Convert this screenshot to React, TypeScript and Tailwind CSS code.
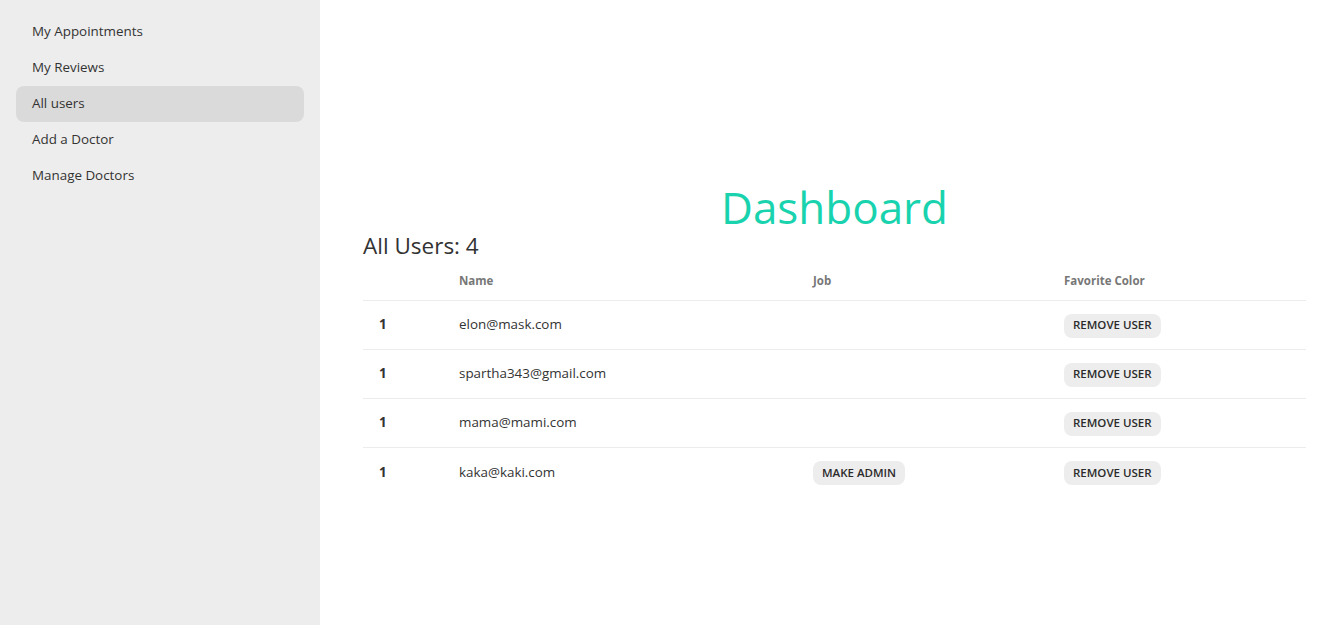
const menu = ["My Appointments", "My Reviews", "All users", "Add a Doctor", "Manage Doctors"];

const users = [
  { email: "elon@mask.com", admin: true },
  { email: "spartha343@gmail.com", admin: true },
  { email: "mama@mami.com", admin: true },
  { email: "kaka@kaki.com", admin: false },
];

function SmallButton({ label }: { label: string }) {
  return (
    <button className="h-6 px-[9px] pb-px rounded-lg bg-[#ededed] text-[11.5px] font-semibold text-[#2b2b2b] uppercase leading-none">
      {label}
    </button>
  );
}

export default function App() {
  return (
    <div className="flex min-h-[625px] bg-white text-[#333] font-['Open_Sans',sans-serif]">
      <aside className="w-[320px] shrink-0 bg-[#ededed] px-4 pt-[14px]">
        <ul className="flex flex-col">
          {menu.map((item) => (
            <li
              key={item}
              className={
                "h-9 flex items-center px-4 pb-px rounded-lg text-[13.4px] text-[#333] " +
                (item === "All users" ? "bg-[#dadada]" : "")
              }
            >
              {item}
            </li>
          ))}
        </ul>
      </aside>

      <main className="flex-1 pl-[43px] pr-9 pt-[178px]">
        <h1 className="text-center text-[44px] leading-[58px] text-[#19d3ae] font-normal">Dashboard</h1>
        <h2 className="text-[22.5px] leading-[20px] text-[#333]">All Users: 4</h2>

        <table className="w-full mt-[6px] text-left border-collapse">
          <thead>
            <tr className="border-b border-[#ececec]">
              <th className="w-[80px] h-[38px]" />
              <th className="w-[354px] px-4 text-[11.5px] font-bold text-[#777]">Name</th>
              <th className="w-[251px] px-4 text-[11.5px] font-bold text-[#777]">Job</th>
              <th className="px-4 text-[11.5px] font-bold text-[#777]">Favorite Color</th>
            </tr>
          </thead>
          <tbody>
            {users.map((u, i) => (
              <tr key={u.email} className={i < users.length - 1 ? "border-b border-[#ececec]" : ""}>
                <td className="h-[49px] px-4 text-[13.4px] font-bold text-[#333]">1</td>
                <td className="px-4 text-[13.4px] text-[#333]">{u.email}</td>
                <td className="px-4">{!u.admin && <SmallButton label="Make Admin" />}</td>
                <td className="px-4">
                  <SmallButton label="Remove User" />
                </td>
              </tr>
            ))}
          </tbody>
        </table>
      </main>
    </div>
  );
}
